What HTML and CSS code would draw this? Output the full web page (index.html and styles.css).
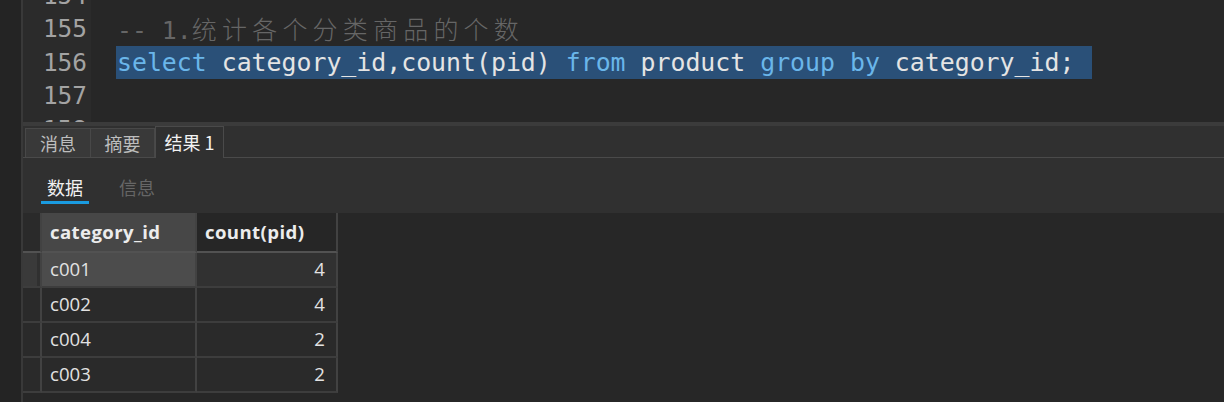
FILE: index.html
```html
<!DOCTYPE html>
<html lang="zh-CN">
<head>
<meta charset="utf-8">
<title>SQL</title>
<link rel="stylesheet" href="styles.css">
</head>
<body>
<div class="app">
  <div class="strip"></div>
  <div class="main">
    <div class="editor">
      <div class="gutter">
        <div class="ln first">154</div>
        <div class="ln">155</div>
        <div class="ln">156</div>
        <div class="ln">157</div>
        <div class="ln">158</div>
      </div>
      <div class="code">
        <div class="line first"></div>
        <div class="line"><span class="cm">-- 1.<span class="cjk">统计各个分类商品的个数</span></span></div>
        <div class="line"><span class="sel"><span class="kw">select</span> category_id,count(pid) <span class="kw">from</span> product <span class="kw">group</span> <span class="kw">by</span> category_id; </span></div>
        <div class="line"></div>
        <div class="line"></div>
      </div>
    </div>
    <div class="splitter"></div>
    <div class="panel">
      <div class="tabbar">
        <div class="tab t1">消息</div>
        <div class="tab t2">摘要</div>
        <div class="tab t3 active">结果&nbsp;1</div>
      </div>
      <div class="subtabs">
        <div class="sub on">数据</div>
        <div class="sub">信息</div>
      </div>
      <div class="gridarea">
        <div class="grid">
          <div class="c rh hd"></div>
          <div class="c hd hl">category_id</div>
          <div class="c hd">count(pid)</div>

          <div class="c rh rsel"></div>
          <div class="c cur">c001</div>
          <div class="c num rowsel">4</div>

          <div class="c rh"></div>
          <div class="c">c002</div>
          <div class="c num">4</div>

          <div class="c rh"></div>
          <div class="c">c004</div>
          <div class="c num">2</div>

          <div class="c rh"></div>
          <div class="c">c003</div>
          <div class="c num">2</div>
        </div>
      </div>
    </div>
  </div>
</div>
</body>
</html>
```

FILE: styles.css
```css
html, body {
  margin: 0;
  padding: 0;
  background: #242424;
  width: 1224px;
  height: 402px;
  overflow: hidden;
}

.app {
  display: flex;
  height: 402px;
}

.strip {
  width: 21px;
  background: #242424;
  border-right: 2px solid #393939;
  flex: none;
}

.main {
  flex: 1;
  display: flex;
  flex-direction: column;
  min-width: 0;
}

.editor {
  height: 122px;
  display: flex;
  overflow: hidden;
  background: #272727;
  font-family: "DejaVu Sans Mono", monospace;
  font-size: 24.4px;
}

.gutter {
  width: 68px;
  flex: none;
  background: #2b2b2b;
  color: #a3a3a3;
  text-align: right;
  box-sizing: border-box;
  padding-right: 4px;
}

.ln, .line {
  height: 33.5px;
  line-height: 33.5px;
  white-space: pre;
}

.first {
  margin-top: -21.5px;
}

.code {
  flex: 1;
  padding-left: 26px;
  color: #e4e4e4;
  font-size: 24.85px;
}

.cm {
  color: #666666;
}

.cjk {
  font-family: "Noto Sans CJK SC", sans-serif;
  font-size: 25px;
  letter-spacing: 5.2px;
  font-weight: 300;
}

.sel {
  background: #2a5078;
  display: inline-block;
  height: 33px;
  margin-left: -1px;
  padding-left: 1px;
  padding-right: 3px;
}

.kw {
  color: #6ab6ea;
}

.splitter {
  height: 4px;
  background: #3b3b3b;
}

.panel {
  flex: 1;
  background: #303030;
  display: flex;
  flex-direction: column;
  font-family: "Open Sans", "Noto Sans CJK SC", sans-serif;
}

.tabbar {
  height: 31px;
  display: flex;
  align-items: flex-end;
  padding-left: 2px;
  border-bottom: 1px solid #4a4a4a;
  font-family: "Noto Sans CJK SC", sans-serif;
  font-size: 18px;
}

.tab {
  height: 29px;
  line-height: 29px;
  box-sizing: border-box;
  background: #393939;
  border: 1px solid #484848;
  border-bottom: none;
  color: #bdbdbd;
  text-align: center;
}

.t1 { width: 66px; }
.t2 { width: 64px; border-left: none; }
.t3 { width: 69px; }

.tab.active {
  height: 32px;
  line-height: 30px;
  margin-bottom: -1px;
  background: #303030;
  color: #f2f2f2;
  border-left: 1px solid #4a4a4a;
  border-right: 1px solid #4a4a4a;
  border-top: 1px solid #4a4a4a;
}

.subtabs {
  height: 55px;
  box-sizing: border-box;
  padding: 17px 0 0 18px;
  display: flex;
  gap: 24px;
  font-family: "Noto Sans CJK SC", sans-serif;
  font-size: 18px;
}

.sub {
  padding: 0 6px;
  height: 29px;
  line-height: 24px;
  box-sizing: border-box;
  color: #666666;
}

.sub.on {
  color: #f0f0f0;
  border-bottom: 3px solid #1a9be0;
}

.gridarea {
  flex: 1;
  background: #272727;
}

.grid {
  display: grid;
  grid-template-columns: 19px 155px 141px;
  grid-auto-rows: 35px;
  grid-template-rows: 40px;
  font-size: 18.6px;
  color: #e2e2e2;
}

.c {
  box-sizing: border-box;
  border-right: 2px solid #424242;
  border-bottom: 2px solid #3d3d3d;
  background: #2a2a2a;
  padding: 0 8px;
  line-height: 31px;
  white-space: nowrap;
}

.hd {
  background: #262626;
  font-weight: 700;
  line-height: 37px;
  border-bottom-color: #525252;
  color: #ececec;
  letter-spacing: 0.4px;
}

.hd.hl {
  background: #474747;
}

.rh {
  padding: 0;
  background: #2a2a2a;
}

.rh.hd {
  background: #2a2a2a;
}

.rsel {
  background: #3a3a3a;
  box-shadow: inset -3px 0 0 #303030;
}

.cur {
  background: #4c4c4c;
}

.rowsel {
  background: #313131;
}

.num {
  text-align: right;
  padding-right: 11px;
}
```
